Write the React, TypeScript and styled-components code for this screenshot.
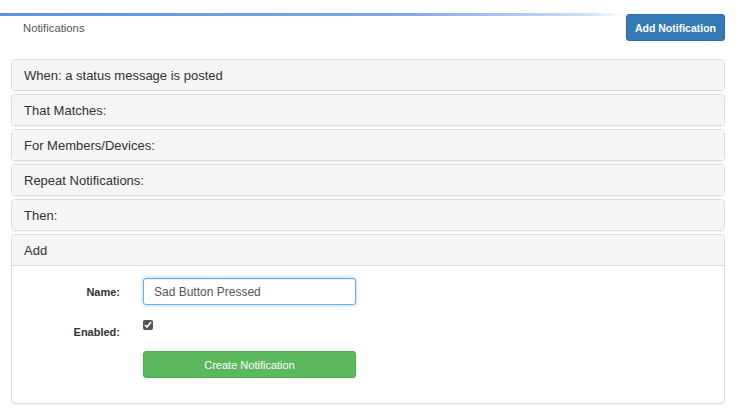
import React, {useState} from 'react';
import styled, {createGlobalStyle} from 'styled-components';

const GlobalStyle = createGlobalStyle`
	html, body {
		margin: 0;
		padding: 0;
		background: #fff;
	}
	body {
		font-family: 'Liberation Sans', Arial, sans-serif;
		color: #333;
	}
`;

const Page = styled.div`
	padding: 13px 15px 0 11px;
`;

const Header = styled.div`
	display: flex;
	justify-content: space-between;
	align-items: flex-start;
	height: 46px;
	margin-left: -11px;
	padding-left: 23px;
	background: linear-gradient(90deg, #5f92dc 0%, #7ea7e6 55%, #c9dbf5 80%, #ffffff 86%) no-repeat top / 100% 3px;
`;

const Title = styled.span`
	margin-top: 9px;
	font-size: 11.3px;
	color: #555;
`;

const Button = styled.button<{$variant: 'primary' | 'success'}>`
	border: 1px solid ${(p) => (p.$variant === 'primary' ? '#2e6da4' : '#4cae4c')};
	background: ${(p) => (p.$variant === 'primary' ? '#337ab7' : '#5cb85c')};
	color: #fff;
	border-radius: 3px;
	font-family: 'Liberation Sans', Arial, sans-serif;
	height: 27px;
	cursor: pointer;
`;

const AddButton = styled(Button)`
	margin-top: 1px;
	width: 99px;
	font-size: 10.5px;
	font-weight: bold;
	padding: 0;
`;

const Panel = styled.div`
	border: 1px solid #ddd;
	border-radius: 4px;
	margin-bottom: 3px;
	box-shadow: 0 1px 1px rgba(0, 0, 0, 0.05);
	background: #fff;
`;

const PanelHeading = styled.div<{$open?: boolean}>`
	height: 30px;
	display: flex;
	align-items: center;
	padding: 0 12px;
	background: #f5f5f5;
	font-size: 13px;
	color: #333;
	border-radius: 3px 3px 0 0;
	border-bottom: ${(p) => (p.$open ? '1px solid #ddd' : 'none')};
`;

const PanelBody = styled.div`
	padding: 12px 0 25px;
	display: grid;
	grid-template-columns: 108px 213px;
	column-gap: 23px;
	align-items: center;
`;

const Label = styled.label`
	justify-self: end;
	font-size: 11px;
	font-weight: bold;
	color: #333;
`;

const Input = styled.input`
	box-sizing: border-box;
	width: 213px;
	height: 27px;
	padding: 0 10px;
	font-family: 'Liberation Sans', Arial, sans-serif;
	font-size: 12px;
	color: #555;
	border: 1px solid #66afe9;
	border-radius: 3px;
	outline: none;
	box-shadow: inset 0 1px 1px rgba(0, 0, 0, 0.075), 0 0 4px rgba(102, 175, 233, 0.6);
`;

const CheckRow = styled.div`
	height: 46px;
	display: flex;
	align-items: flex-start;
	padding-top: 15px;
	box-sizing: border-box;
`;

const EnabledLabel = styled(Label)`
	align-self: start;
	padding-top: 21px;
`;

const Check = styled.input`
	margin: 0;
	width: 10px;
	height: 10px;
	accent-color: #555;
`;

const CreateButton = styled(Button)`
	width: 213px;
	font-size: 11px;
`;

const sections = [
	'When: a status message is posted',
	'That Matches:',
	'For Members/Devices:',
	'Repeat Notifications:',
	'Then:',
];

export default function App() {
	const [name, setName] = useState('Sad Button Pressed');
	const [enabled, setEnabled] = useState(true);

	return (
		<>
			<GlobalStyle />
			<Page>
				<Header>
					<Title>Notifications</Title>
					<AddButton $variant="primary">Add Notification</AddButton>
				</Header>
				{sections.map((s) => (
					<Panel key={s}>
						<PanelHeading>{s}</PanelHeading>
					</Panel>
				))}
				<Panel>
					<PanelHeading $open>Add</PanelHeading>
					<PanelBody>
						<Label>Name:</Label>
						<Input value={name} onChange={(e) => setName(e.target.value)} />
						<EnabledLabel>Enabled:</EnabledLabel>
						<CheckRow>
							<Check type="checkbox" checked={enabled} onChange={(e) => setEnabled(e.target.checked)} />
						</CheckRow>
						<span />
						<CreateButton $variant="success">Create Notification</CreateButton>
					</PanelBody>
				</Panel>
			</Page>
		</>
	);
}
